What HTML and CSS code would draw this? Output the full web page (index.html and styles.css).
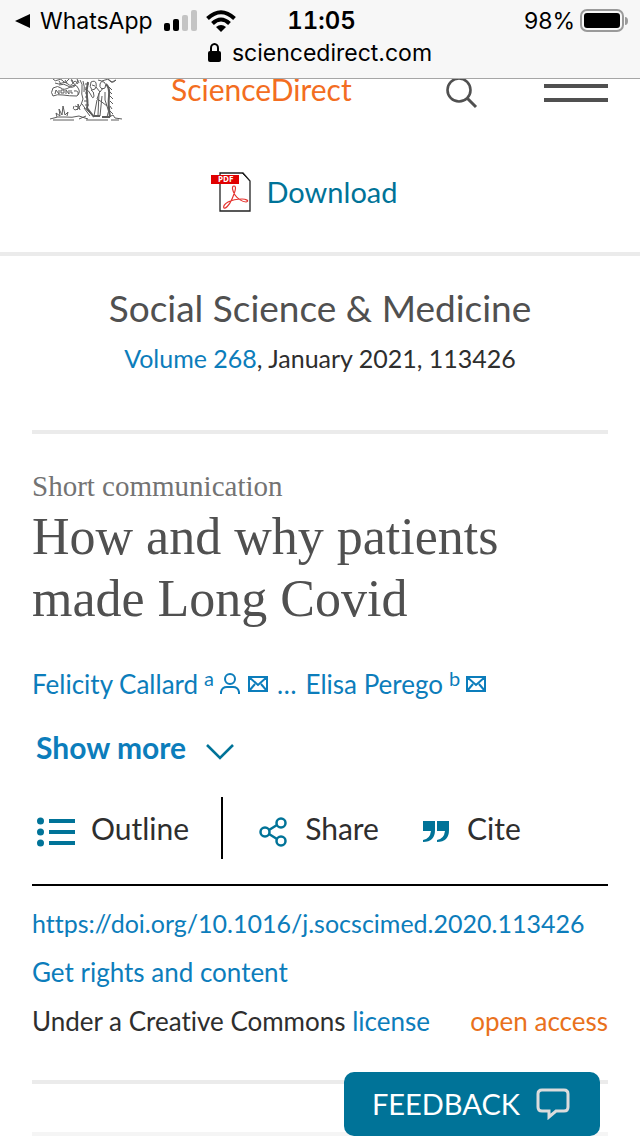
FILE: index.html
```html
<!DOCTYPE html>
<html lang="en">
<head>
  <meta charset="UTF-8">
  <meta name="viewport" content="width=device-width, initial-scale=1">
  <title>How and why patients made Long Covid - ScienceDirect</title>
  <link rel="stylesheet" href="styles.css">
</head>
<body>

<div class="browser-bar">
  <div class="status">
    <div class="status-left">
      <svg width="16" height="16" viewBox="0 0 16 16"><path d="M0 8L15 1v14z"/></svg>
      <span class="back-app">WhatsApp</span>
      <svg class="signal" width="34" height="22" viewBox="0 0 34 22">
        <rect x="0" y="13" width="6" height="8" rx="2"/>
        <rect x="9" y="9" width="6" height="12" rx="2"/>
        <rect x="18" y="5" width="6" height="16" rx="2" fill="#c4c4c4"/>
        <rect x="27" y="0" width="6" height="21" rx="2" fill="#c4c4c4"/>
      </svg>
      <svg width="30" height="22" viewBox="0 0 30 22">
        <g fill="none" stroke="#000" stroke-width="4">
          <path d="M1.500 8.500Q15-4 28.500 8.500"/>
          <path d="M6.500 13.500Q15 5.500 23.500 13.500"/>
        </g>
        <path d="M10 17q5-4 10 0l-5 5z"/>
      </svg>
    </div>
    <span class="clock">11:05</span>
    <div class="status-right">
      <span>98%</span>
      <svg width="48" height="24" viewBox="0 0 48 24">
        <rect x="1" y="1" width="42" height="21" rx="6" fill="none" stroke="#9a9a9a" stroke-width="2"/>
        <rect x="4" y="4" width="36" height="15" rx="3"/>
        <path d="M45 8q3 0 3 4t-3 4z" fill="#9a9a9a"/>
      </svg>
    </div>
  </div>
  <div class="address">
    <svg width="14" height="20" viewBox="0 0 14 20">
      <rect x="0" y="8" width="13" height="11" rx="2"/>
      <path d="M3 9V5a3.500 4 0 0 1 7 0v4" fill="none" stroke="#000" stroke-width="2"/>
    </svg>
    <span>sciencedirect.com</span>
  </div>
</div>

<header class="site-header">
  <svg class="tree-logo" width="72" height="42" viewBox="0 0 72 42" fill="none" stroke="#5c5c5c" stroke-width="1">
    <!-- leaves -->
    <path d="M3 0q2 3 5 1t5 1 5-1 5 2 5-2M5 4q4 2 7 0t6 1 5-1 5 1M9 2l2 3M15 1l2 3M21 1l2 3M27 0l2 4M48 1q4 2 7 0t5 1 6-1M58 0l4 3 4-2"/>
    <!-- banner -->
    <path d="M3 9q-3 5 0 8 4-2 10-1t14 1q4-4 1-8M3 9q5-3 8 0t9-1 8 1M9 6q5-2 9 1t8-1M24 12q5-1 4 4"/>
    <path d="M5 15l1-4 3 4V11M11 11v3h3v-3zM16 15v-4l3 4v-4M21 11v3h2"/>
    <!-- trunk -->
    <path d="M30 1q3 4 2 9t1 10q-1 6-6 11M33 2q2 6 1 11M35 10q4 1 6 6t3 1q0-5-3-6M32 25q3 5 7 8l5 5M34 29l6 8"/>
    <path d="M38 3q-2 8-1 15t0 11l7 9" stroke-width="2"/>
    <path d="M35 5h4M35 9h3M35 14h3M35 18h3M34 22h4M35 26h4"/>
    <!-- figure -->
    <path d="M41 3q4-2 5 1t-1 6l-3 1q-3-3-1-8zM42 6l3 1M46 8l4 5 3-4M50 5q1-4 4-2t1 6l-3 1q-3-2-2-5M50 12l-3 8q4 2 10 7M49 14l-1 22M52 17l-2 20M55 13q-1 9 2 14t0 11M47 21l-3 16"/>
    <path d="M56 5q4 4 3 12t1 21" stroke-width="2"/>
    <path d="M59 8l3 3M59 12l3 3M60 17l3 3M60 22l3 3M60 27l2 3M60 32l3 3"/>
    <path d="M44 37h6M52 38h8" stroke-width="2"/>
    <!-- rabbit and ground -->
    <path d="M24 27q-2 3 1 4l3-1v-5l2 6M25 27l3 1"/>
    <path d="M0 40q8-3 15-2t14-1l9 3M7 38l-1-4 4 3-1-7 3 6 1-9 2 9 3-3-1 4M3 41h21M29 40l7-3M36 41h22M59 38l4-2 2 3 7 1M61 41h8"/>
  </svg>
  <a class="brand" href="#">ScienceDirect</a>
  <button class="icon-button search" type="button" aria-label="Search">
    <svg width="32" height="30" viewBox="0 0 32 30" fill="none" stroke="#505050">
      <circle cx="13" cy="11" r="11.500" stroke-width="2.600"/>
      <path d="M21 19l9 9" stroke-width="3"/>
    </svg>
  </button>
  <button class="icon-button menu" type="button" aria-label="Menu">
    <svg width="64" height="18" viewBox="0 0 64 18"><path d="M0 2h64M0 16h64" stroke="#505050" stroke-width="4"/></svg>
  </button>
</header>

<div class="download-bar">
  <a class="download" href="#">
    <svg width="40" height="40" viewBox="0 0 40 40">
      <path d="M9 1h23l7 8v30H9z" fill="#fff" stroke="#222" stroke-width="1.300"/>
      <path d="M31 1l8 8" fill="none" stroke="#222"/>
      <rect x="0" y="3" width="28" height="9" fill="#e00000"/>
      <text class="pdf-label" x="7" y="10">PDF</text>
      <path d="M23 14c-3 0-1 6 1 9s7 7 11 7c4-1 0-3-4-3s-10 1-14 3-5 5-4 6 5-2 8-9 5-13 2-13z" fill="none" stroke="#e5322d" stroke-width="1.200"/>
    </svg>
    <span>Download</span>
  </a>
</div>

<main class="article">
  <section class="publication">
    <h2 class="journal">Social Science &amp; Medicine</h2>
    <p class="volume"><a href="#">Volume 268</a>, January 2021, 113426</p>
  </section>

  <p class="article-type">Short communication</p>
  <h1 class="title">How and why patients made Long Covid</h1>

  <div class="authors">
    <a href="#">Felicity Callard</a>
    <sup>a</sup>
    <svg class="person" width="20" height="22" viewBox="0 0 20 22" fill="none" stroke="#0c7dbb" stroke-width="2">
      <circle cx="10" cy="6" r="5"/>
      <path d="M1 21v-2q1-5 6-5h6q5 0 6 5v2"/>
    </svg>
    <svg class="mail" width="20" height="16" viewBox="0 0 20 16" fill="none" stroke="#0c7dbb" stroke-width="2">
      <path d="M1 1h18v14H1zM1 1l9 8 9-8M1 15l6-7M19 15l-6-7"/>
    </svg>
    <span class="dots">…</span>
    <a href="#">Elisa Perego</a>
    <sup>b</sup>
    <svg width="20" height="16" viewBox="0 0 20 16" fill="none" stroke="#0c7dbb" stroke-width="2">
      <path d="M1 1h18v14H1zM1 1l9 8 9-8M1 15l6-7M19 15l-6-7"/>
    </svg>
  </div>

  <button class="show-more" type="button">
    <span>Show more</span>
    <svg width="28" height="16" viewBox="0 0 28 16"><path d="M1 1l13 13L27 1" fill="none" stroke="#007398" stroke-width="2.600"/></svg>
  </button>

  <div class="toolbar">
    <button class="tool outline" type="button">
      <svg width="38" height="30" viewBox="0 0 38 30" fill="#007398">
        <circle cx="3.500" cy="4" r="3.500"/><circle cx="3.500" cy="15" r="3.500"/><circle cx="3.500" cy="26" r="3.500"/>
        <path d="M12 2h26v4H12zM12 13h26v4H12zM12 24h26v4H12z"/>
      </svg>
      <span>Outline</span>
    </button>
    <button class="tool share" type="button">
      <svg width="28" height="30" viewBox="0 0 28 30" fill="none" stroke="#007398" stroke-width="2.500">
        <circle cx="6" cy="15" r="4.500"/><circle cx="22" cy="6" r="4.500"/><circle cx="22" cy="24" r="4.500"/>
        <path d="M10 13l8-5M10 17l8 5"/>
      </svg>
      <span>Share</span>
    </button>
    <button class="tool cite" type="button">
      <svg width="26" height="22" viewBox="0 0 26 22" fill="#007398">
        <path d="M0 0h12v9q0 12-12 12v-2q7-1 8-9H0zM14 0h12v9q0 12-12 12v-2q7-1 8-9h-8z"/>
      </svg>
      <span>Cite</span>
    </button>
  </div>

  <div class="rights">
    <a class="doi" href="#">https://doi.org/10.1016/j.socscimed.2020.113426</a>
    <a href="#">Get rights and content</a>
    <div class="license">
      <span>Under a Creative Commons <a href="#">license</a></span>
      <span class="open-access">open access</span>
    </div>
  </div>

  <div class="next-section"></div>
</main>

<button class="feedback" type="button">
  <span>FEEDBACK</span>
  <svg width="34" height="32" viewBox="0 0 34 32">
    <path d="M6 2h22q4 0 4 4v13q0 4-4 4H20l-7 6v-6H6q-4 0-4-4V6q0-4 4-4z" fill="none" stroke="#dcdcdc" stroke-width="3"/>
  </svg>
</button>

</body>
</html>
```
FILE: styles.css
```css
* {
  box-sizing: border-box;
}

body {
  margin: 0;
  background: #fff;
  color: #2e2e2e;
  font-family: Lato, "Open Sans", sans-serif;
  font-size: 26px;
  font-variant-ligatures: none;
  line-height: 32px;
}

h1,
h2,
p {
  margin: 0;
  font-weight: 400;
}

a {
  color: #0c7dbb;
  text-decoration: none;
}

svg {
  display: block;
  flex: none;
}

button {
  padding: 0;
  border: none;
  background: none;
  color: inherit;
  font: inherit;
  cursor: pointer;
}

/* browser chrome */
.browser-bar {
  position: relative;
  z-index: 1;
  padding-top: 5px;
  height: 79px;
  background: #f7f7f7;
  border-bottom: 1px solid #a6a6a6;
  color: #000;
  font-family: Inter, sans-serif;
  font-size: 23px;
}

.status {
  display: grid;
  grid-template-columns: 1fr auto 1fr;
  align-items: center;
  padding: 0 12px 0 15px;
  height: 32px;
}

.status-left,
.status-right {
  display: flex;
  align-items: center;
}

.back-app {
  margin: 0 11px 0 9px;
}

.signal {
  margin-right: 8px;
}

.clock {
  font-size: 24px;
  font-weight: 600;
  font-variant-numeric: tabular-nums;
}

.status-right {
  justify-content: flex-end;
  gap: 5px;
}

.address {
  display: flex;
  justify-content: center;
  align-items: center;
  gap: 10px;
}

/* site header */
.site-header {
  display: flex;
  align-items: flex-start;
  padding: 0 32px 0 50px;
  height: 93px;
}

.brand {
  margin-left: 49px;
  color: #f36d21;
  font-size: 30px;
  line-height: 20px;
}

.search {
  margin-left: auto;
}

.menu {
  margin: 5px 0 0 66px;
}

.download-bar {
  display: flex;
  justify-content: center;
  padding: 0 32px 40px 0;
  border-bottom: 4px solid #ebebeb;
}

.download {
  display: flex;
  align-items: center;
  gap: 16px;
  color: #007398;
  font-size: 29px;
  line-height: 40px;
}

.pdf-label {
  fill: #fff;
  font-family: "Open Sans", sans-serif;
  font-size: 8px;
  font-weight: 700;
}

/* article */
.article {
  padding: 0 32px;
}

.publication {
  padding: 28px 0 56px;
  border-bottom: 4px solid #ebebeb;
  text-align: center;
}

.journal {
  color: #505050;
  font-size: 37px;
  line-height: 48px;
}

.volume {
  margin-top: 10px;
  font-size: 25px;
}

.article-type {
  margin-top: 36px;
  color: #737373;
  font-family: "Liberation Serif", serif;
  font-size: 29px;
}

.title {
  margin-top: 4px;
  max-width: 500px;
  color: #505050;
  font-family: "Liberation Serif", serif;
  font-size: 52px;
  line-height: 62px;
}

.authors {
  display: flex;
  align-items: center;
  margin-top: 38px;
  color: #0c7dbb;
}

.authors sup {
  margin: 0 6px;
  font-size: 20px;
  line-height: 20px;
  align-self: flex-start;
}

.mail {
  margin-left: 8px;
}

.dots {
  margin: 0 9px;
}

.show-more {
  display: flex;
  align-items: center;
  gap: 20px;
  margin: 31px 0 0 4px;
  color: #0c7dbb;
  font-size: 30px;
  font-weight: 700;
}

.show-more svg {
  margin-top: 10px;
}

.toolbar {
  display: flex;
  align-items: center;
  margin-top: 34px;
  padding-bottom: 25px;
  border-bottom: 2px solid #000;
}

.tool {
  display: flex;
  align-items: center;
  gap: 18px;
  height: 62px;
  font-size: 30px;
}

.tool svg {
  margin-top: 8px;
}

.outline {
  gap: 16px;
  padding: 0 32px 0 5px;
  border-right: 2px solid #000;
}

.share {
  margin-left: 36px;
}

.cite {
  margin-left: 44px;
}

.rights {
  display: flex;
  flex-direction: column;
  align-items: flex-start;
  gap: 17px;
  padding: 21px 0 43px;
  border-bottom: 4px solid #ebebeb;
}

.doi {
  font-size: 25px;
}

.license {
  display: flex;
  justify-content: space-between;
  width: 100%;
}

.open-access {
  color: #e9711c;
}

.next-section {
  height: 52px;
  border-bottom: 4px solid #f5f5f5;
}

/* feedback tab stays over the page */
.feedback {
  position: fixed;
  right: 40px;
  bottom: 0;
  display: flex;
  align-items: center;
  gap: 16px;
  padding: 0 30px 0 28px;
  height: 64px;
  border-radius: 10px;
  background: #007398;
  color: #fff;
  font-size: 29px;
}
```
